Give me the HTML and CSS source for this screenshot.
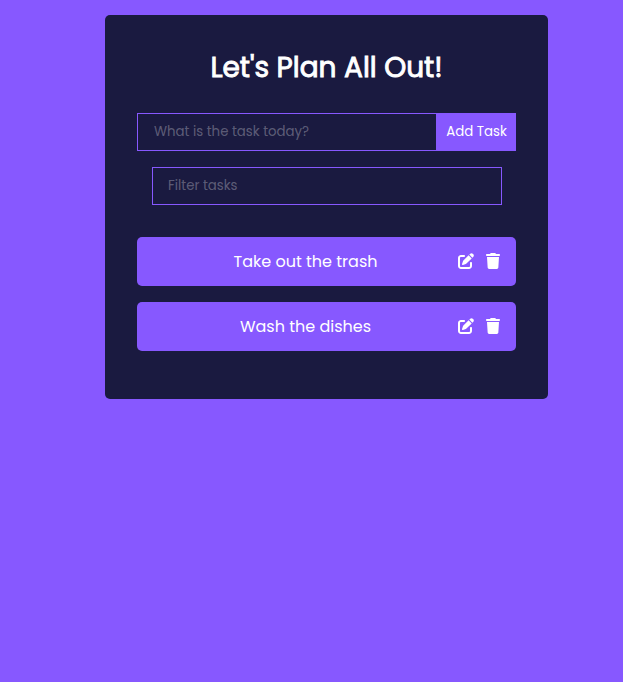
FILE: index.html
```html
<!DOCTYPE html>
<html lang="en">
<head>
<meta charset="utf-8">
<title>Let's Plan All Out!</title>
<link rel="stylesheet" href="styles.css">
</head>
<body>
<svg class="sprite" aria-hidden="true">
<symbol id="edit" viewBox="0 0 512 512"><path d="M471.6 21.7c-21.9-21.9-57.3-21.9-79.2 0L362.3 51.7l97.9 97.9 30.1-30.1c21.9-21.9 21.9-57.3 0-79.2L471.6 21.7zm-299.2 220c-6.1 6.1-10.8 13.6-13.5 21.9l-29.6 88.8c-2.9 8.6-.6 18.1 5.8 24.6s15.9 8.7 24.6 5.8l88.8-29.6c8.2-2.7 15.7-7.4 21.9-13.5L437.7 172.3 339.7 74.3 172.4 241.7zM96 64C43 64 0 107 0 160V416c0 53 43 96 96 96H352c53 0 96-43 96-96V320c0-17.7-14.3-32-32-32s-32 14.3-32 32v96c0 17.7-14.3 32-32 32H96c-17.7 0-32-14.3-32-32V160c0-17.7 14.3-32 32-32h96c17.7 0 32-14.3 32-32s-14.3-32-32-32H96z"/></symbol>
<symbol id="trash" viewBox="0 0 448 512"><path d="M135.2 17.7L128 32H32C14.3 32 0 46.3 0 64S14.3 96 32 96H416c17.7 0 32-14.3 32-32s-14.3-32-32-32H320l-7.2-14.3C307.4 6.8 296.3 0 284.2 0H163.8c-12.1 0-23.2 6.8-28.6 17.7zM416 128H32L53.2 467c1.6 25.3 22.6 45 47.9 45H346.9c25.3 0 46.3-19.7 47.9-45L416 128z"/></symbol>
</svg>
<main class="card">
<h1 class="title">Let's Plan All Out!</h1>
<form class="task-form">
<input class="field task-input" type="text" placeholder="What is the task today?">
<button class="add" type="button">Add Task</button>
</form>
<input class="field filter" type="text" placeholder="Filter tasks">
<ul class="tasks">
<li class="task"><span class="name">Take out the trash</span><svg class="edit"><use href="#edit"/></svg><svg class="trash"><use href="#trash"/></svg></li>
<li class="task"><span class="name">Wash the dishes</span><svg class="edit"><use href="#edit"/></svg><svg class="trash"><use href="#trash"/></svg></li>
</ul>
</main>
</body>
</html>
```
FILE: styles.css
```css
* { box-sizing: border-box; margin: 0; padding: 0; }
body { background: #8758ff; font-family: Poppins, Inter, sans-serif; color: #fff; }
.sprite { display: none; }
.card { width: 443px; height: 384px; margin: 15px 0 0 105px; padding: 32px; background: #1a1a40; border-radius: 5px; }
.title { height: 42px; line-height: 42px; margin-bottom: 24px; text-align: center; font-size: 28px; font-weight: 400; -webkit-text-stroke: 0.9px #fff; white-space: nowrap; }
.task-form { display: flex; height: 38px; margin-bottom: 16px; }
.field { display: block; height: 38px; padding: 0 16px; border: 1px solid #8758ff; background: transparent; color: #fff; font: 13.33px Poppins, Inter, sans-serif; border-radius: 0; outline: none; }
.field::placeholder { color: #ffffff4d; opacity: 1; }
.task-input { width: 299px; border-right: 0; }
.add { width: 80px; border: 0; padding: 0 0 1px 1px; background: #8758ff; color: #fff; font: 13.33px Poppins, Inter, sans-serif; }
.filter { width: 350px; margin: 0 0 32px 15px; padding-left: 15px; }
.tasks { list-style: none; }
.task { display: flex; align-items: center; height: 49px; margin-bottom: 16px; padding: 0 16px; background: #8758ff; border-radius: 5px; }
.name { flex: 1; text-align: center; font-size: 16px; line-height: 24px; white-space: nowrap; }
.edit, .trash { flex: none; height: 16px; margin-bottom: 1px; fill: #fff; }
.edit { width: 16px; }
.trash { width: 14px; margin-left: 12px; }
```
